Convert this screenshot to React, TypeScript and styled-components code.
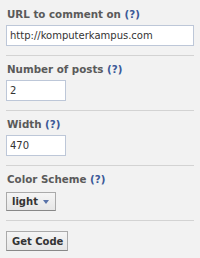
import styled, { createGlobalStyle } from "styled-components";

const GlobalStyle = createGlobalStyle`
  html, body {
    margin: 0;
    padding: 0;
    background: #f2f2f2;
    font-family: "DejaVu Sans", Verdana, sans-serif;
  }
`;

const Panel = styled.div`
  width: 200px;
  height: 258px;
  padding: 0 6px;
  box-sizing: border-box;
  background: #f2f2f2;
`;

const Section = styled.div<{ $last?: boolean }>`
  padding: 6px 0 9px;
  border-bottom: ${(p) => (p.$last ? "none" : "1px solid #d3d3d3")};
  &:first-child {
    padding-top: 7px;
  }
`;

const Label = styled.div`
  font-size: 10.3px;
  line-height: 14px;
  font-weight: bold;
  color: #5a5a5a;
  padding-left: 1px;
  margin-bottom: 4px;
`;

const Help = styled.span`
  color: #3b5998;
`;

const TextInput = styled.input<{ $w: number }>`
  display: block;
  width: ${(p) => p.$w}px;
  height: 21px;
  box-sizing: border-box;
  margin: 0;
  padding: 0 3px;
  border: 1px solid #bdc7d8;
  background: #fff;
  font-family: "DejaVu Sans", Verdana, sans-serif;
  font-size: 10px;
  color: #333;
  outline: none;
`;

const SelectBox = styled.div`
  display: inline-flex;
  align-items: center;
  gap: 5px;
  height: 19px;
  box-sizing: border-box;
  padding: 0 6px 0 5px;
  margin-top: 1px;
  background: linear-gradient(#f5f5f5, #e6e6e6);
  border: 1px solid #aaa;
  border-bottom-color: #888;
  font-size: 10px;
  font-weight: bold;
  color: #333;
`;

const Arrow = styled.span`
  width: 0;
  height: 0;
  border-left: 3.5px solid transparent;
  border-right: 3.5px solid transparent;
  border-top: 4px solid #5872a8;
  margin-top: 1px;
`;

const Button = styled.button`
  display: block;
  height: 20px;
  box-sizing: border-box;
  margin: 4px 0 0;
  padding: 0 4px 0 5px;
  background: linear-gradient(#f5f5f5, #e6e6e6);
  border: 1px solid #aaa;
  border-bottom-color: #888;
  font-family: "DejaVu Sans", Verdana, sans-serif;
  font-size: 10px;
  font-weight: bold;
  color: #333;
`;

export default function App() {
  return (
    <>
      <GlobalStyle />
      <Panel>
        <Section>
          <Label>
            URL to comment on <Help>(?)</Help>
          </Label>
          <TextInput $w={188} defaultValue="http://komputerkampus.com" />
        </Section>
        <Section>
          <Label>
            Number of posts <Help>(?)</Help>
          </Label>
          <TextInput $w={60} defaultValue="2" />
        </Section>
        <Section>
          <Label>
            Width <Help>(?)</Help>
          </Label>
          <TextInput $w={60} defaultValue="470" />
        </Section>
        <Section>
          <Label>
            Color Scheme <Help>(?)</Help>
          </Label>
          <SelectBox>
            light <Arrow />
          </SelectBox>
        </Section>
        <Section $last>
          <Button>Get Code</Button>
        </Section>
      </Panel>
    </>
  );
}
